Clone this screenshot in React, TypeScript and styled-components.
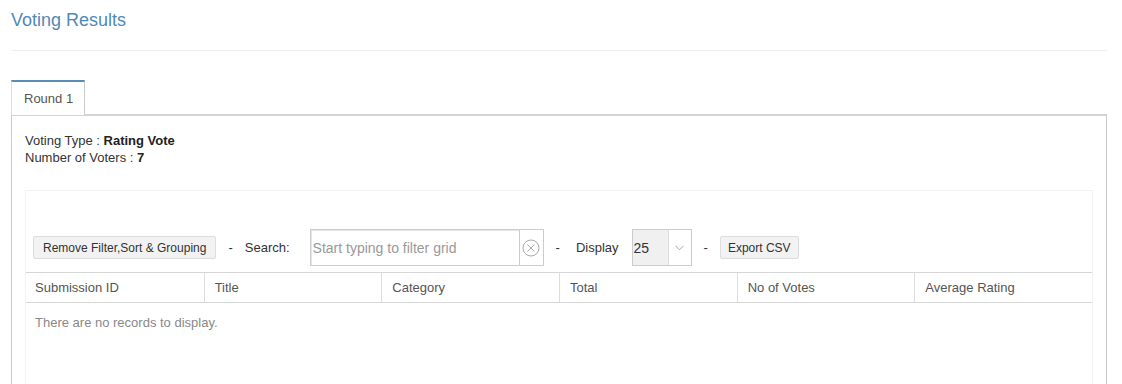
import React from 'react';
import styled, { createGlobalStyle } from 'styled-components';

const GlobalStyle = createGlobalStyle`
  html, body {
    margin: 0;
    padding: 0;
    background: #fff;
    font-family: "Liberation Sans", Arial, sans-serif;
    color: #333;
  }
  * {
    box-sizing: border-box;
  }
`;

const Page = styled.div`
  padding: 0 15px 0 11px;
`;

const Header = styled.div`
  padding: 10px 0 20px;
  border-bottom: 1px solid #eee;
`;

const Title = styled.h1`
  margin: 0;
  font-size: 18px;
  line-height: 20px;
  font-weight: normal;
  color: #5089b8;
`;

const TabBar = styled.div`
  display: flex;
  margin-top: 29px;
  position: relative;
  z-index: 1;
  margin-bottom: -1px;
`;

const Tab = styled.div<{ active?: boolean }>`
  height: 35px;
  padding: 0 11px 0 12px;
  display: flex;
  align-items: center;
  font-size: 13px;
  color: #555;
  background: #fff;
  border-top: 2px solid ${p => (p.active ? '#5b8cb5' : '#ddd')};
  border-left: 1px solid #ddd;
  border-right: 1px solid #ccc;
`;

const Panel = styled.div`
  border: 1px solid #ccc;
  border-top: 2px solid #d4d4d4;
  padding: 16px 13px 0;
  min-height: 280px;
`;

const InfoLine = styled.div`
  font-size: 13px;
  line-height: 17px;
  color: #333;

  b {
    color: #222;
  }
`;

const GridBox = styled.div`
  margin-top: 24px;
  border: 1px solid #f2f2f2;
  border-bottom: none;
  min-height: 200px;
`;

const Toolbar = styled.div`
  display: flex;
  align-items: center;
  padding: 38px 7px 0;
  height: 75px;
  font-size: 13px;
  color: #333;
`;

const Button = styled.button<{ pad?: number }>`
  height: 23px;
  padding: 0 ${p => p.pad ?? 9}px;
  font-family: "Liberation Sans", Arial, sans-serif;
  font-size: 12px;
  color: #333;
  background: #f2f2f2;
  border: 1px solid #ddd;
  border-radius: 2px;
  cursor: pointer;
`;

const Sep = styled.span`
  padding: 0 12px;
  color: #333;
`;

const Label = styled.span<{ left?: number; right?: number }>`
  margin-left: ${p => p.left ?? 0}px;
  margin-right: ${p => p.right ?? 0}px;
`;

const SearchGroup = styled.div`
  display: flex;
  height: 37px;
`;

const SearchInput = styled.input`
  width: 210px;
  height: 37px;
  padding: 0 2px;
  font-family: "Liberation Sans", Arial, sans-serif;
  font-size: 14px;
  color: #333;
  border: 1px solid #ccc;
  box-shadow: inset 1px 1px 0 #e6e6e6;
  outline: none;

  &::placeholder {
    color: #999;
  }
`;

const ClearAddon = styled.span`
  width: 24px;
  height: 37px;
  display: flex;
  align-items: center;
  justify-content: center;
  border: 1px solid #ccc;
  border-left: none;
`;

const Select = styled.div`
  display: flex;
  width: 60px;
  height: 37px;
  border: 1px solid #ccc;
`;

const SelectValue = styled.span`
  width: 36px;
  background: #f0f0f0;
  border-right: 1px solid #ddd;
  font-size: 14px;
  color: #333;
  display: flex;
  align-items: center;
  padding-left: 1px;
`;

const SelectArrow = styled.span`
  flex: 1;
  display: flex;
  align-items: center;
  justify-content: center;
`;

const Table = styled.div`
  margin-top: 6px;
`;

const HeaderRow = styled.div`
  display: grid;
  grid-template-columns: repeat(6, 1fr);
  border-top: 1px solid #d6d6d6;
  border-bottom: 1px solid #d6d6d6;
`;

const HeaderCell = styled.div<{ first?: boolean }>`
  height: 29px;
  display: flex;
  align-items: center;
  padding-left: ${p => (p.first ? 9 : 10)}px;
  font-size: 13px;
  color: #555;
  border-left: ${p => (p.first ? 'none' : '1px solid #ddd')};
`;

const EmptyRow = styled.div`
  padding: 12px 9px;
  font-size: 13px;
  line-height: 15px;
  color: #888;
`;

const ClearIcon = () => (
  <svg width="18" height="18" viewBox="0 0 18 18" fill="none" stroke="#aaa" strokeWidth="1">
    <circle cx="9" cy="9" r="8" />
    <path d="M5.5 5.5l7 7M12.5 5.5l-7 7" />
  </svg>
);

const ChevronIcon = () => (
  <svg width="9" height="6" viewBox="0 0 9 6" fill="none" stroke="#aaa" strokeWidth="1">
    <path d="M0.5 0.8l4 4 4-4" />
  </svg>
);

const columns = ['Submission ID', 'Title', 'Category', 'Total', 'No of Votes', 'Average Rating'];

export default function App() {
  return (
    <>
      <GlobalStyle />
      <Page>
        <Header>
          <Title>Voting Results</Title>
        </Header>

        <TabBar>
          <Tab active>Round 1</Tab>
        </TabBar>
        <Panel>
          <InfoLine>
            Voting Type : <b>Rating Vote</b>
          </InfoLine>
          <InfoLine>
            Number of Voters : <b>7</b>
          </InfoLine>

          <GridBox>
            <Toolbar>
              <Button>Remove Filter,Sort &amp; Grouping</Button>
              <Sep>-</Sep>
              <Label right={20}>Search:</Label>
              <SearchGroup>
                <SearchInput placeholder="Start typing to filter grid" />
                <ClearAddon>
                  <ClearIcon />
                </ClearAddon>
              </SearchGroup>
              <Sep>-</Sep>
              <Label left={4} right={13}>Display</Label>
              <Select>
                <SelectValue>25</SelectValue>
                <SelectArrow>
                  <ChevronIcon />
                </SelectArrow>
              </Select>
              <Sep>-</Sep>
              <Button pad={7}>Export CSV</Button>
            </Toolbar>

            <Table>
              <HeaderRow>
                {columns.map((c, i) => (
                  <HeaderCell key={c} first={i === 0}>
                    {c}
                  </HeaderCell>
                ))}
              </HeaderRow>
              <EmptyRow>There are no records to display.</EmptyRow>
            </Table>
          </GridBox>
        </Panel>
      </Page>
    </>
  );
}
